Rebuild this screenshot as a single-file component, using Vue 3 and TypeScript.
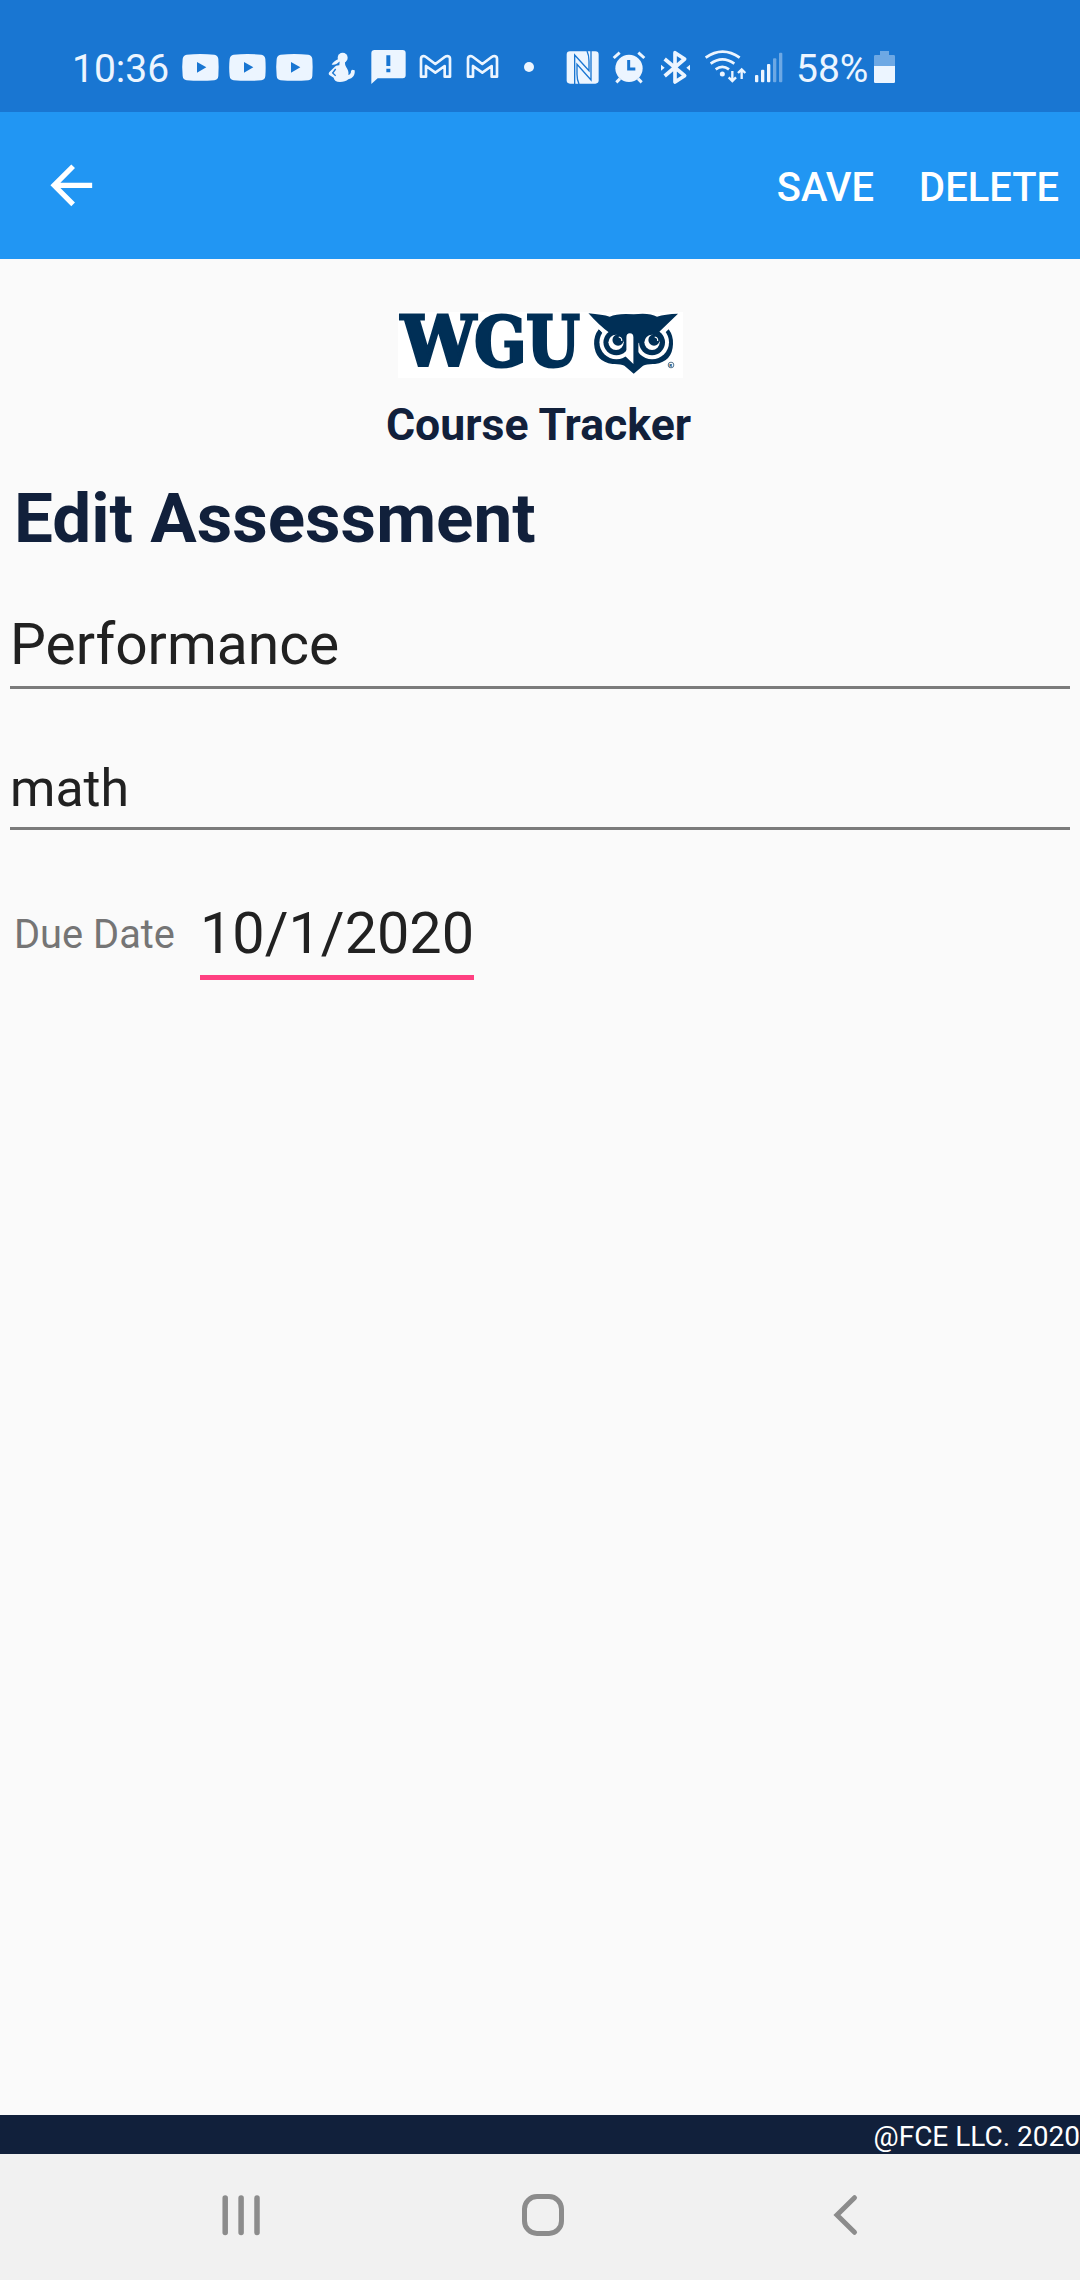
<script setup lang="ts">
import { ref } from 'vue'

const time = '10:36'
const battery = '58%'
const assessment = ref({ type: 'Performance', name: 'math', due: '10/1/2020' })
</script>

<template>
  <div class="screen">
    <header class="status">
      <span class="clock">{{ time }}</span>
      <svg v-for="n in 3" :key="'yt' + n" class="ic" width="47" height="60" viewBox="351 0 141 180">
        <path fill-rule="evenodd" d="M380 44Q421 40 463 44Q474 46 475 57Q477 82 475 108Q474 119 463 121Q421 124 380 121Q369 119 368 108Q365 82 368 57Q369 46 380 44ZM411 66V98L439 82Z" />
      </svg>
      <svg class="ic" width="47" height="60" viewBox="54 0 141 180">
        <circle cx="128" cy="53" r="15" />
        <path d="M117 56C106 61 98 67 95 74C105 76 114 70 119 64Z" />
        <path d="M119 64H136C133 74 138 80 142 87C146 94 146 100 145 105C151 104 153 99 153 93L156 89L164 91C166 105 158 116 145 118C139 124 130 126 120 126C109 126 102 121 101 113L88 105C85 101 86 98 89 95L106 79C110 75 114 77 118 76Z" />
        <path d="M107 87L98 99L107 107" fill="none" stroke="#1976d2" stroke-width="4" />
      </svg>
      <svg class="ic" width="47" height="60" viewBox="195 0 141 180">
        <path fill-rule="evenodd" d="M224 30H308Q317 30 317 39V106Q317 115 308 115H233L214 132V40Q214 30 224 30ZM259 46V78H271V46ZM259 86V97H271V86Z" />
      </svg>
      <svg v-for="n in 2" :key="'gm' + n" class="ic" width="47" height="60" viewBox="336 0 141 180">
        <path d="M363 110V56Q363 49 370 48Q374 48 378 51L406 72L434 51Q438 48 443 48Q450 49 450 56V110H434V78L406 98L378 78V110Z" fill="none" stroke="#ecf5ff" stroke-width="8" stroke-linejoin="round" />
      </svg>
      <svg class="ic" width="54" height="60" viewBox="618 0 162 180"><circle cx="687" cy="81" r="15" /></svg>
      <svg class="ic" width="47" height="60" viewBox="60 0 141 180">
        <rect x="80" y="34" width="96" height="97" rx="10" />
        <path d="M104 132V45L147 92V64Q147 45 141 33" fill="none" stroke="#1976d2" stroke-width="4" />
        <path d="M153 33V120L111 73V103Q111 120 117 132" fill="none" stroke="#1976d2" stroke-width="4" />
      </svg>
      <svg class="ic" width="46" height="60" viewBox="201 0 138 180">
        <circle cx="267" cy="85" r="41" />
        <path d="M221 54L239 38M313 54L295 38M240 116L229 127M294 116L305 127" fill="none" stroke="#ecf5ff" stroke-width="9" />
        <path d="M266 60V87H286" fill="none" stroke="#1976d2" stroke-width="9" />
      </svg>
      <svg class="ic" width="47" height="60" viewBox="339 0 141 180">
        <path d="M374 57L434 107L405 126V38L434 57L374 108" fill="none" stroke="#ecf5ff" stroke-width="11" stroke-linejoin="round" />
        <path d="M363 74L374 83L363 92ZM450 74L439 83L450 92Z" />
      </svg>
      <svg class="ic" width="50" height="60" viewBox="480 0 150 180">
        <path d="M497 53Q548 17 599 53M512 71Q547 45 583 71M527 88Q547 73 567 88" fill="none" stroke="#ecf5ff" stroke-width="8.500" />
        <circle cx="547" cy="102" r="7.500" />
        <path d="M577 93V122M566 112L577 123L588 112M605 117V88M594 99L605 88L616 99" fill="none" stroke="#ecf5ff" stroke-width="7" />
      </svg>
      <svg class="ic" width="46" height="60" viewBox="630 0 138 180">
        <rect x="645" y="105" width="10" height="22" rx="3" />
        <rect x="663" y="89" width="10" height="38" rx="3" />
        <rect x="681" y="72" width="10" height="55" rx="3" />
        <rect x="699" y="55" width="10" height="72" rx="3" opacity=".4" />
        <rect x="717" y="38" width="10" height="89" rx="3" opacity=".4" />
      </svg>
      <span class="percent">{{ battery }}</span>
      <svg class="ic" width="30" height="60" viewBox="990 0 90 180">
        <path d="M1020 33H1047V45H1061Q1065 45 1065 49V78H1002V49Q1002 45 1006 45H1020Z" opacity=".4" />
        <path d="M1002 78H1065V125Q1065 129 1061 129H1006Q1002 129 1002 125Z" />
      </svg>
    </header>

    <nav class="appbar">
      <svg class="back" viewBox="0 0 24 24"><path d="M20 11H7.830l5.590-5.590L12 4l-8 8 8 8 1.410-1.410L7.830 13H20v-2z" fill="#fff" /></svg>
      <span class="action save">SAVE</span>
      <span class="action delete">DELETE</span>
    </nav>

    <main>
      <svg class="logo" width="285" height="66" viewBox="84 66 856 198" preserveAspectRatio="none">
        <rect x="84" y="66" width="856" height="198" fill="#fff" />
        <g class="wordmark">
          <text x="93" y="228" textLength="225" lengthAdjust="spacingAndGlyphs">W</text>
          <text x="313" y="228" textLength="157" lengthAdjust="spacingAndGlyphs">G</text>
          <text x="469" y="228" textLength="161" lengthAdjust="spacingAndGlyphs">U</text>
        </g>
        <g fill="#002f56">
          <path d="M687 118Q672 137 673 162Q676 215 728 222Q752 221 764 227L792 251L820 227Q832 221 856 222Q908 215 910 162Q911 137 897 118L882 130H702Z" />
          <circle cx="740" cy="157" r="51" fill="#fff" />
          <circle cx="847" cy="157" r="51" fill="#fff" />
          <path d="M687 116L702 105H882L897 116L880 136H704Z" fill="#fff" />
          <path d="M779 140H806V210L792 222L779 208Z" />
          <circle cx="740" cy="157" r="39" />
          <circle cx="847" cy="157" r="39" />
          <path d="M656 70Q698 74 720 80Q744 69 792 73Q838 67 862 80Q886 72 925 71L868 126Q846 121 822 141L806 160H779Q756 120 716 126Q690 108 656 70Z" />
          <circle cx="739" cy="157" r="23" fill="#fff" />
          <circle cx="847" cy="157" r="23" fill="#fff" />
          <circle cx="745" cy="150" r="17" />
          <circle cx="853" cy="150" r="17" />
          <path d="M747 141Q757 143 756 153M855 141Q865 143 864 153" fill="none" stroke="#fff" stroke-width="3.500" />
          <path d="M770 142Q770 130 780.500 130Q791 130 791 142V222L766 198L770 192Z" fill="#fff" />
          <circle cx="904" cy="225" r="8.500" fill="none" stroke="#002f56" stroke-width="2" />
        </g>
        <text x="899" y="230.500" class="reg">R</text>
      </svg>
      <div class="product">Course Tracker</div>
      <h1>Edit Assessment</h1>
      <div class="field type">{{ assessment.type }}</div>
      <div class="field name">{{ assessment.name }}</div>
      <div class="due">
        <label>Due Date</label>
        <span class="date">{{ assessment.due }}</span>
      </div>
    </main>

    <footer>@FCE LLC. 2020</footer>
    <div class="system">
      <svg width="1080" height="126" viewBox="0 0 1080 126" fill="none" stroke="#8c8c8c">
        <path d="M225.200 44V78.500M241.100 44V78.500M257 44V78.500" stroke-width="5.500" stroke-linecap="round" />
        <rect x="524.500" y="42.500" width="37" height="37" rx="12.500" stroke-width="5" />
        <path d="M854.500 43.700L837 61L854.500 78.300" stroke-width="5" stroke-linecap="round" />
      </svg>
    </div>
  </div>
</template>

<style>
body { margin: 0; background: #fafafa; }
</style>

<style scoped>
.screen {
  width: 1080px;
  height: 2280px;
  display: flex;
  flex-direction: column;
  background: #fafafa;
  font-family: Roboto, "Liberation Sans", sans-serif;
  overflow: hidden;
}
svg { display: block; flex: none; }
.status {
  height: 72px;
  padding: 40px 0 0 72px;
  display: flex;
  background: #1976d2;
  color: #ecf5ff;
  font-size: 39px;
  line-height: 58px;
}
.ic { fill: #ecf5ff; }
.clock { width: 105px; }
.percent { width: 74px; }
.appbar {
  height: 147px;
  display: flex;
  align-items: center;
  background: #2196f3;
  color: #fff;
}
.back { width: 62.600px; height: 62.600px; margin-left: 40px; }
.action {
  font-size: 39.900px;
  font-weight: 500;
  line-height: 48px;
  margin-top: 4px;
}
.save { margin-left: auto; }
.delete { margin-left: 45px; margin-right: 21px; }
main { flex: 1; display: flex; flex-direction: column; }
.logo { margin: 53px 0 0 398px; overflow: visible; }
.wordmark {
  font-family: "DejaVu Serif", serif;
  font-weight: 700;
  font-size: 208px;
  fill: #002f56;
  stroke: #002f56;
  stroke-width: 9px;
}
.reg { font-size: 13px; font-weight: 700; fill: #002f56; }
.product {
  margin: 21px 3px 0 0;
  text-align: center;
  color: #11203b;
  font-size: 44.600px;
  font-weight: 700;
  line-height: 53px;
}
h1 {
  margin: 26px 0 0 14px;
  color: #11203b;
  font-size: 69.200px;
  font-weight: 700;
  line-height: 81px;
}
.field {
  margin: 0 10px;
  color: #212121;
  line-height: 67px;
  border-bottom: 3px solid #7b7b7b;
}
.type { margin-top: 52px; padding-bottom: 8px; font-size: 56.900px; }
.name { margin-top: 66px; padding-bottom: 5px; font-size: 51.800px; }
.due {
  margin-top: 71px;
  display: flex;
  align-items: flex-start;
  line-height: 66px;
}
.due label { width: 186px; margin-left: 14px; color: #757575; font-size: 39.800px; line-height: 67px; }
.date {
  padding-bottom: 8px;
  color: #212121;
  font-size: 57.600px;
  border-bottom: 5px solid #ff4081;
}
footer {
  height: 39px;
  background: #11203b;
  color: #fff;
  text-align: right;
  font-size: 28px;
  line-height: 43px;
}
.system { height: 126px; background: #f1f1f1; }
</style>
